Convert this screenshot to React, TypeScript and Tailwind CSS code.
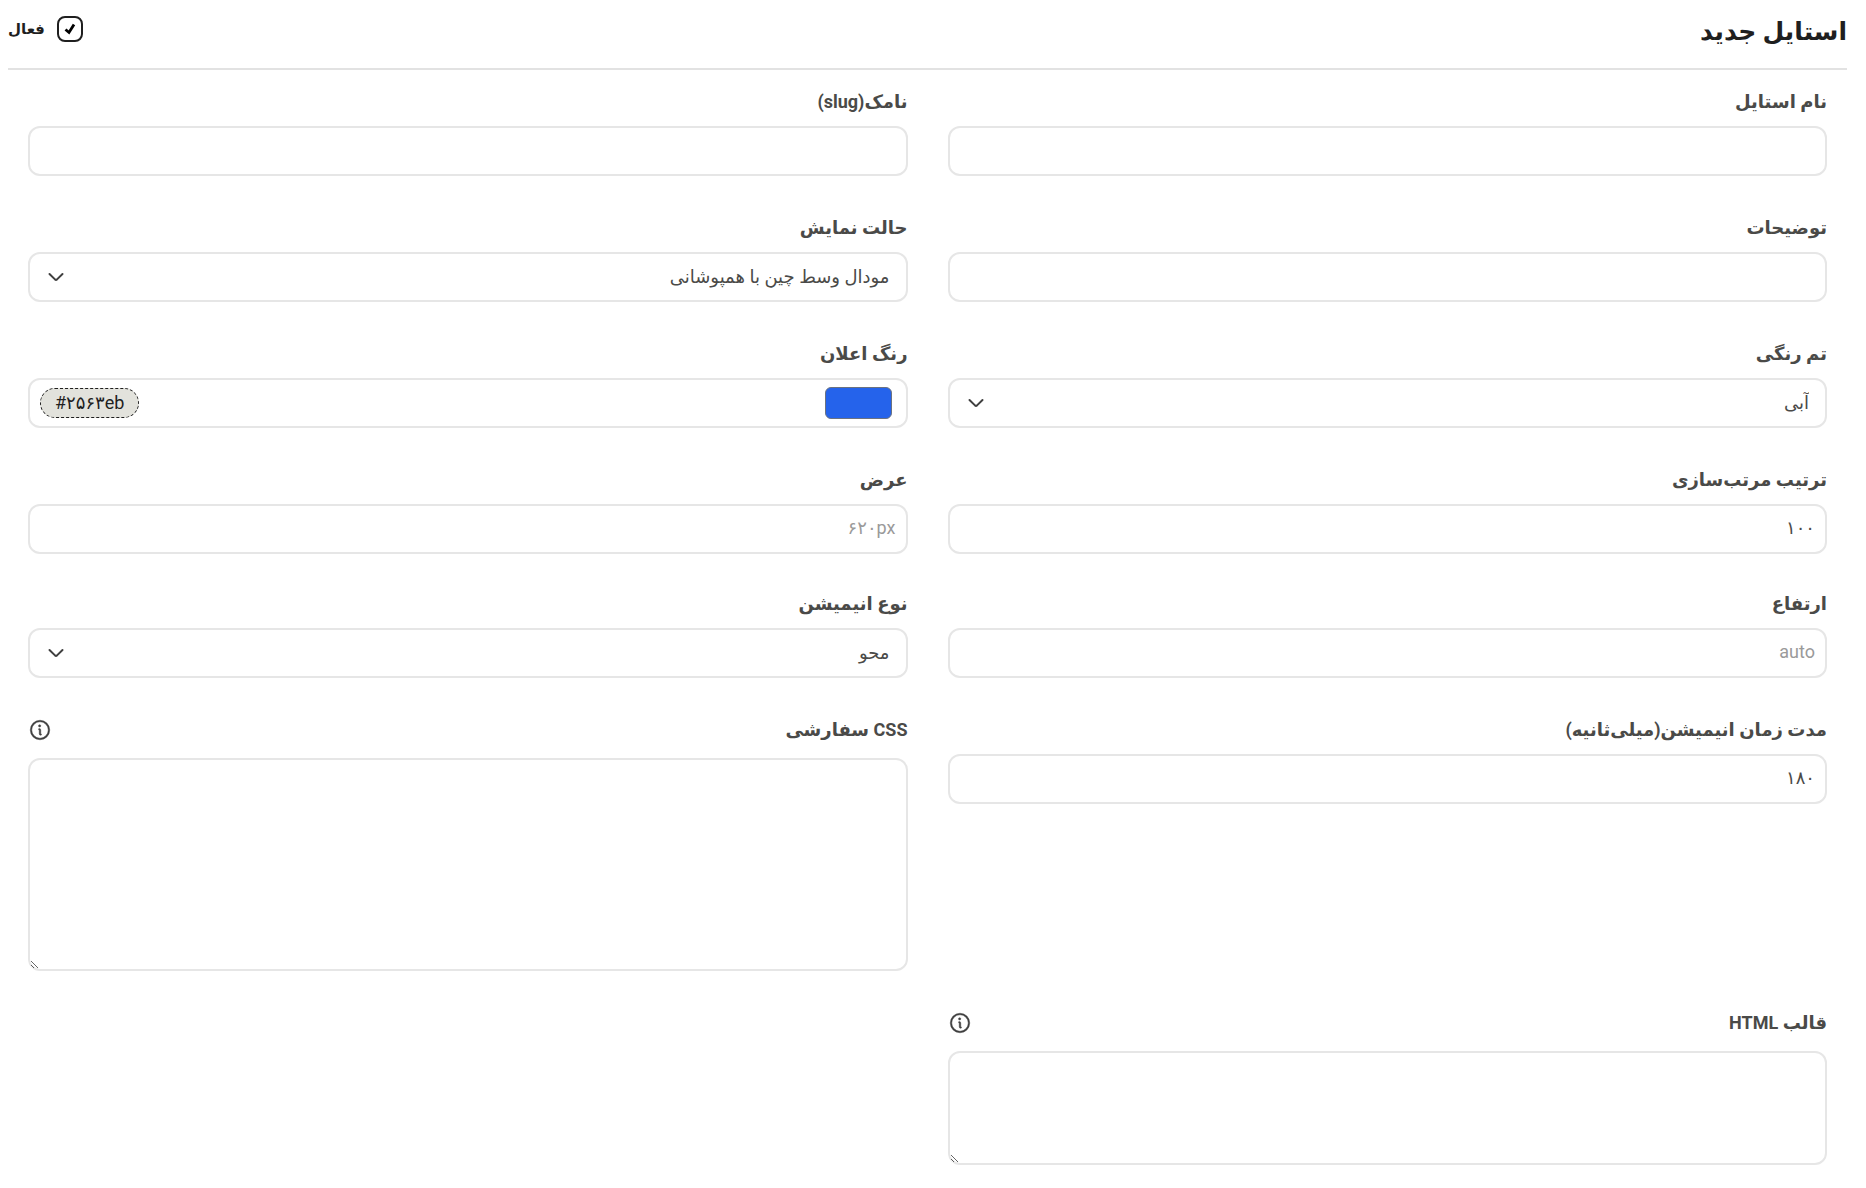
import React, { useState } from 'react';
import { PiInfo } from 'react-icons/pi';

interface FieldProps {
  id: string;
  label: string;
  hint?: string;
  children: React.ReactNode;
}

const controlClass =
  'block w-full rounded-xl border-2 border-[#e6e6e6] bg-white text-[#4a4a48] outline-none focus:border-[#bdbdbd]';

/**
 * Field
 * - Label above a control, with an optional info button at the far end.
 */
const Field: React.FC<FieldProps> = ({ id, label, hint, children }) => (
  <div className="min-w-0 px-5">
    <div className={hint ? 'mb-3.5 flex h-7 items-center justify-between' : 'mb-2.5 flex h-7 items-center'}>
      <label htmlFor={id} className="text-lg leading-7 font-bold text-[#4a4a48]">
        {label}
      </label>
      {hint && (
        <button type="button" title={hint} aria-label={hint} className="text-[#3f3f3f]">
          <PiInfo size={24} strokeWidth={5} />
        </button>
      )}
    </div>
    {children}
  </div>
);

interface TextInputProps {
  id: string;
  value: string;
  placeholder?: string;
  onChange: (value: string) => void;
}

const TextInput: React.FC<TextInputProps> = ({ id, value, placeholder, onChange }) => (
  <input
    id={id}
    type="text"
    value={value}
    placeholder={placeholder}
    onChange={(e) => onChange(e.target.value)}
    className={`${controlClass} h-[50px] px-2.5 pb-1 text-lg placeholder:text-[#9a9a9a]`}
  />
);

interface SelectInputProps {
  id: string;
  value: string;
  options: string[];
  onChange: (value: string) => void;
}

const SelectInput: React.FC<SelectInputProps> = ({ id, value, options, onChange }) => (
  <div className="relative">
    <select
      id={id}
      value={value}
      onChange={(e) => onChange(e.target.value)}
      className={`${controlClass} h-[50px] appearance-none pr-4 pl-12 text-lg`}
    >
      {options.map((o) => (
        <option key={o} value={o}>
          {o}
        </option>
      ))}
    </select>
    <svg
      viewBox="0 0 16 10"
      className="pointer-events-none absolute top-5 left-5 h-2.5 w-4 text-[#3f3f3f]"
      fill="none"
      stroke="currentColor"
      strokeWidth="2"
      strokeLinecap="round"
      strokeLinejoin="round"
      aria-hidden="true"
    >
      <path d="M1.500 2l5.500 5.400q1 .9 2 0L14.500 2" />
    </svg>
  </div>
);

const toPersianDigits = (text: string) => text.replace(/\d/g, (d) => '۰۱۲۳۴۵۶۷۸۹'[Number(d)]);

export const NewStylePage: React.FC = () => {
  const [active, setActive] = useState<boolean>(true);
  const [color, setColor] = useState<string>('#2563eb');
  const [form, setForm] = useState({
    name: '',
    slug: '',
    description: '',
    display: 'مودال وسط چین با همپوشانی',
    theme: 'آبی',
    order: '۱۰۰',
    width: '',
    height: '',
    animation: 'محو',
    duration: '۱۸۰',
    css: '',
    html: ''
  });

  const update = (key: keyof typeof form) => (value: string) => setForm({ ...form, [key]: value });

  return (
    <main
      dir="rtl"
      className="bg-white pr-[19px] pb-5 pl-2 font-['Roboto','DejaVu_Sans',sans-serif] text-[#1f1f1f]"
    >
      <header className="flex h-[70px] items-start justify-between border-b-2 border-[#e2e2e2] pt-4">
        <h1 className="text-[25px] leading-8 font-bold">استایل جدید</h1>
        <label className="flex items-center gap-3 text-[15px] leading-6 font-bold">
          <span className="relative block size-[26px]">
            <input
              type="checkbox"
              checked={active}
              onChange={(e) => setActive(e.target.checked)}
              className="block size-full appearance-none rounded-lg border-2 border-[#1f1f1f]"
            />
            {active && (
              <svg viewBox="0 0 26 26" className="pointer-events-none absolute inset-0 size-full" aria-hidden="true">
                <path d="M8.500 13.500l3.500 3L17 8.500" fill="none" stroke="#000" strokeWidth="2.8" />
              </svg>
            )}
          </span>
          فعال
        </label>
      </header>

      <form className="flex flex-col gap-9 pt-[18px]">
        <div className="grid grid-cols-2 gap-y-[38px]">
          <Field id="name" label="نام استایل">
            <TextInput id="name" value={form.name} onChange={update('name')} />
          </Field>
          <Field id="slug" label="نامک(slug)">
            <TextInput id="slug" value={form.slug} onChange={update('slug')} />
          </Field>
          <Field id="description" label="توضیحات">
            <TextInput id="description" value={form.description} onChange={update('description')} />
          </Field>
          <Field id="display" label="حالت نمایش">
            <SelectInput
              id="display"
              value={form.display}
              options={['مودال وسط چین با همپوشانی']}
              onChange={update('display')}
            />
          </Field>
          <Field id="theme" label="تم رنگی">
            <SelectInput id="theme" value={form.theme} options={['آبی']} onChange={update('theme')} />
          </Field>
          <Field id="color" label="رنگ اعلان">
            <div className="flex h-[50px] items-center justify-between rounded-xl border-2 border-[#e6e6e6] pr-3.5 pl-2.5">
              <input
                id="color"
                type="color"
                value={color}
                onChange={(e) => setColor(e.target.value)}
                className="h-8 w-[67px] [&::-webkit-color-swatch]:rounded-md [&::-webkit-color-swatch]:border [&::-webkit-color-swatch]:border-[#6b7280] [&::-webkit-color-swatch-wrapper]:p-0"
              />
              <span
                dir="ltr"
                className="flex h-[30px] items-center rounded-full border border-dashed border-[#1f1f1f] bg-[#e2e2dc] px-3.5 text-lg leading-6 text-[#1f1f1f]"
              >
                {toPersianDigits(color)}
              </span>
            </div>
          </Field>
          <Field id="order" label="ترتیب مرتب‌سازی">
            <TextInput id="order" value={form.order} onChange={update('order')} />
          </Field>
          <Field id="width" label="عرض">
            <TextInput id="width" value={form.width} placeholder="۶۲۰px" onChange={update('width')} />
          </Field>
        </div>

        <div className="grid grid-cols-2 gap-y-[38px]">
          <Field id="height" label="ارتفاع">
            <TextInput id="height" value={form.height} placeholder="auto" onChange={update('height')} />
          </Field>
          <Field id="animation" label="نوع انیمیشن">
            <SelectInput id="animation" value={form.animation} options={['محو']} onChange={update('animation')} />
          </Field>
          <Field id="duration" label="مدت زمان انیمیشن(میلی‌ثانیه)">
            <TextInput id="duration" value={form.duration} onChange={update('duration')} />
          </Field>
          <Field id="css" label="CSS سفارشی" hint="راهنمای CSS">
            <textarea
              id="css"
              value={form.css}
              onChange={(e) => update('css')(e.target.value)}
              className={`${controlClass} h-[213px] resize-y p-2.5`}
            />
          </Field>
          <Field id="html" label="قالب HTML" hint="راهنمای HTML">
            <textarea
              id="html"
              value={form.html}
              onChange={(e) => update('html')(e.target.value)}
              className={`${controlClass} h-[114px] resize-y p-2.5`}
            />
          </Field>
        </div>
      </form>
    </main>
  );
};

export default NewStylePage;
